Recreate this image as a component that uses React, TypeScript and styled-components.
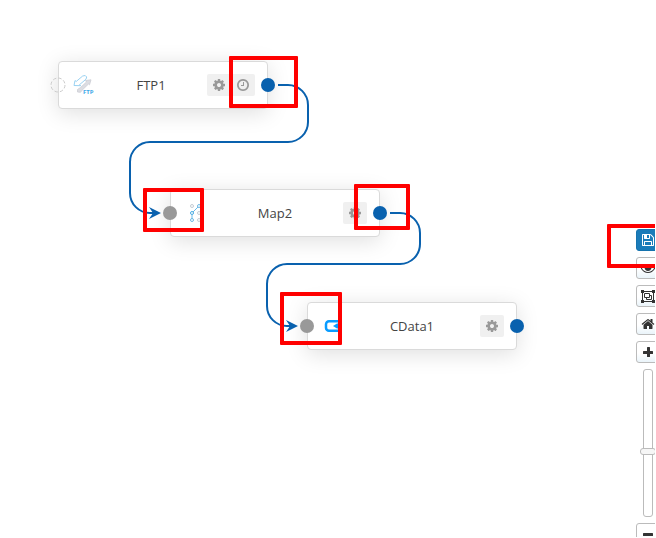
import React from "react";
import styled, { createGlobalStyle, css } from "styled-components";

const BLUE = "#0961ae";
const RED = "#ff0000";

const GlobalStyle = createGlobalStyle`
  * { box-sizing: border-box; }
  html, body, #root { height: 100%; margin: 0; }
  body { background: #fff; overflow: hidden; }
`;

const Screen = styled.main`
  position: relative;
  display: flex;
  justify-content: flex-end;
  height: calc(100% - 1px);
  margin-right: 1px;
  overflow: hidden;
  background: #fff;
  color: #444;
  font-family: "Open Sans", "Noto Sans", sans-serif;
  font-size: 13px;
`;

const Canvas = styled.section`
  flex: 1;
  min-width: 0;
`;

const Wires = styled.svg`
  position: absolute;
  inset: 0;
  width: 100%;
  height: 100%;
  overflow: visible;
  pointer-events: none;
`;

const Node = styled.article<{ $x: number; $y: number }>`
  position: absolute;
  left: ${(p) => p.$x}px;
  top: ${(p) => p.$y}px;
  display: flex;
  align-items: center;
  width: 210px;
  height: 48px;
  padding: 0 12px 0 14px;
  border: 1px solid #dadada;
  border-radius: 4px;
  background: #fff;
  box-shadow: 0 4px 22px rgba(0, 0, 0, 0.13);
`;

const NodeIcon = styled.svg`
  flex: none;
  width: 22px;
  height: 22px;
`;

const NodeName = styled.h2`
  flex: 1;
  margin: 0;
  font-size: 13px;
  font-weight: 400;
  line-height: 20px;
  text-align: center;
`;

const Actions = styled.div`
  display: flex;
  flex: none;
`;

const ActionButton = styled.button`
  display: grid;
  place-items: center;
  width: 24px;
  height: 22px;
  padding: 0;
  border: 0;
  border-radius: 2px;
  background: #f0f0f0;
  color: #999;
`;

const Port = styled.span<{ $side: "in" | "out"; $kind: "blue" | "gray" | "empty" }>`
  position: absolute;
  top: 16px;
  width: 14px;
  height: 14px;
  border-radius: 50%;
  ${(p) => (p.$side === "in" ? "left: -8px;" : "right: -8px;")}
  ${(p) =>
    p.$kind !== "empty" &&
    css`
      background: ${p.$kind === "blue" ? BLUE : "#999"};
    `}
`;

const EmptyRing = styled.svg`
  display: block;
  width: 14px;
  height: 14px;
  overflow: visible;
`;

const Highlight = styled.div<{ $x: number; $y: number; $w: number; $h: number }>`
  position: absolute;
  left: ${(p) => p.$x}px;
  top: ${(p) => p.$y}px;
  width: ${(p) => p.$w}px;
  height: ${(p) => p.$h}px;
  border: 4px solid ${RED};
  border-radius: 1px;
  pointer-events: none;
`;

const Toolbar = styled.aside`
  display: flex;
  flex: none;
  flex-direction: column;
  align-items: center;
  gap: 6px;
  width: 24px;
  margin-right: -5px;
  padding-top: 229px;
`;

const ToolButton = styled.button<{ $primary?: boolean }>`
  display: grid;
  flex: none;
  place-items: center;
  width: 24px;
  height: 22px;
  padding: 0;
  border: 1px solid ${(p) => (p.$primary ? "#1573ae" : "#bbb")};
  border-radius: 3px;
  background: ${(p) => (p.$primary ? "#1a7bb9" : "linear-gradient(#fff 55%, #eaf4fa)")};
  color: ${(p) => (p.$primary ? "#fff" : "#333")};
`;

const Slider = styled.input`
  flex: none;
  width: 16px;
  height: 148px;
  margin: 0;
  appearance: none;
  writing-mode: vertical-lr;
  direction: rtl;
  background: transparent;

  &::-webkit-slider-runnable-track {
    width: 10px;
    height: 148px;
    border: 1px solid #bbb;
    border-radius: 3px;
    background: #fff;
  }

  &::-webkit-slider-thumb {
    appearance: none;
    width: 16px;
    height: 7px;
    margin-left: -4px;
    border: 1px solid #bbb;
    border-radius: 3px;
    background: #f6f6f6;
  }
`;

const Glyph = styled.svg<{ $w?: number }>`
  display: block;
  width: ${(p) => p.$w ?? 14}px;
  height: 14px;
  fill: currentColor;
`;

const paths = {
  cog: "M1152 896q0-106-75-181t-181-75-181 75-75 181 75 181 181 75 181-75 75-181zm512-109v222q0 12-8 23t-20 13l-185 28q-19 54-39 91 35 50 107 138 10 12 10 25t-9 23q-27 37-99 108t-94 71q-12 0-26-9l-138-108q-44 23-91 38-16 136-29 186-7 28-36 28h-222q-14 0-24.5-8.5t-11.5-21.5l-28-184q-49-16-90-37l-141 107q-10 9-25 9-14 0-25-11-126-114-165-168-7-10-7-23 0-12 8-23 15-21 51-66.5t54-70.5q-27-50-41-99l-183-27q-13-2-21-12.5t-8-23.5v-222q0-12 8-23t19-13l186-28q14-46 39-92-40-57-107-138-10-12-10-24 0-10 9-23 26-36 98.5-107.5t94.5-71.5q13 0 26 10l138 107q44-23 91-38 16-136 29-186 7-28 36-28h222q14 0 24.5 8.5t11.5 21.5l28 184q49 16 90 37l142-107q9-9 24-9 13 0 25 10 129 119 165 170 7 8 7 22 0 12-8 23-15 21-51 66.5t-54 70.5q26 50 41 98l183 28q13 2 21 12.5t8 23.5z",
  clock: "M1024 544v448q0 14-9 23t-23 9h-320q-14 0-23-9t-9-23v-64q0-14 9-23t23-9h224v-352q0-14 9-23t23-9h64q14 0 23 9t9 23zm416 352q0-148-73-273t-198-198-273-73-273 73-198 198-73 273 73 273 198 198 273 73 273-73 198-198 73-273zm224 0q0 209-103 385.5t-279.5 279.5-385.5 103-385.5-103-279.5-279.5-103-385.5 103-385.5 279.5-279.5 385.5-103 385.5 103 279.5 279.5 103 385.5z",
  save: "M512 1536h768v-384h-768v384zm896 0h128v-896q0-14-10-38.5t-20-34.5l-281-281q-10-10-34-20t-39-10v416q0 40-28 68t-68 28h-576q-40 0-68-28t-28-68v-416h-128v1280h128v-416q0-40 28-68t68-28h832q40 0 68 28t28 68v416zm-384-928v-320q0-13-9.5-22.5t-22.5-9.5h-192q-13 0-22.5 9.5t-9.5 22.5v320q0 13 9.5 22.5t22.5 9.5h192q13 0 22.5-9.5t9.5-22.5zm640 32v928q0 40-28 68t-68 28h-1344q-40 0-68-28t-28-68v-1344q0-40 28-68t68-28h928q40 0 88 20t76 48l280 280q28 28 48 76t20 88z",
  eye: "M1664 960q-152-236-381-353 61 104 61 225 0 185-131.5 316.5t-316.5 131.5-316.5-131.5-131.5-316.5q0-121 61-225-229 117-381 353 133 205 333.5 326.5t434.5 121.5 434.5-121.5 333.5-326.5zm-720-384q0-20-14-34t-34-14q-125 0-214.5 89.5t-89.5 214.5q0 20 14 34t34 14 34-14 14-34q0-86 61-147t147-61q20 0 34-14t14-34zm848 384q0 34-20 69-140 230-376.5 368.5t-499.5 138.5-499.5-139-376.5-368q-20-35-20-69t20-69q140-229 376.5-368t499.5-139 499.5 139 376.5 368q20 35 20 69z",
  home: "M1472 992v480q0 26-19 45t-45 19h-384v-384h-256v384h-384q-26 0-45-19t-19-45v-480q0-1 .5-3t.5-3l575-474 575 474q1 2 1 6zm223-69l-62 74q-8 9-21 11h-3q-13 0-21-7l-692-577-692 577q-12 8-24 7-13-2-21-11l-62-74q-8-10-7-23.5t11-21.5l719-599q32-26 76-26t76 26l244 204v-195q0-14 9-23t23-9h192q14 0 23 9t9 23v408l219 182q10 8 11 21.5t-7 23.5z",
};

const Icon = ({ name }: { name: keyof typeof paths }) => (
  <Glyph viewBox="0 0 1792 1792" aria-hidden="true">
    <path d={paths[name]} />
  </Glyph>
);

const GroupIcon = () => (
  <Glyph $w={16} viewBox="0 0 16 14" aria-hidden="true">
    <path
      d="M3 2.500h10M3 12.500h10M2.500 4v7M13.500 4v7M4.500 4.500h5v4h-5zM10 6.500h1.500v4h-5V9"
      fill="none"
      stroke="currentColor"
    />
    <path d="M1 1h3v3H1zM12 1h3v3h-3zM1 11h3v3H1zM12 11h3v3h-3z" />
  </Glyph>
);

const PlusIcon = () => (
  <Glyph viewBox="0 0 14 14" aria-hidden="true">
    <rect x="2" y="6" width="10" height="3" rx=".5" />
    <rect x="6" y="2" width="3" height="10" rx=".5" />
  </Glyph>
);

const MinusIcon = () => (
  <Glyph viewBox="0 0 14 14" aria-hidden="true">
    <rect x="2" y="6" width="10" height="3" rx=".5" />
  </Glyph>
);

const FtpText = styled.text`
  font: 700 6px "Open Sans", sans-serif;
  fill: #3fa9e8;
`;

const FtpIcon = () => (
  <NodeIcon viewBox="0 0 22 22" aria-hidden="true">
    <path
      d="M4.500 15.500v2.500l3 .3 1.500-2 6.500-6.300 1 .8 1.500-5-5.500.7 1 1.500-6 5.500z"
      fill="#dcdde2"
      stroke="#cccdd4"
      strokeWidth=".8"
      strokeLinejoin="round"
    />
    <path
      d="M1 11.500l1-5 1.200 1 6.500-5.500 2.500-.5 1.500 1.500-.7 2.200-6.500 5.500 1.200 1z"
      fill="#fff"
      stroke="#9ad2f2"
      strokeLinejoin="round"
    />
    <FtpText x="10" y="20">FTP</FtpText>
  </NodeIcon>
);

const MapIcon = () => (
  <NodeIcon viewBox="0 0 22 22" aria-hidden="true" fill="none">
    <path d="M8 10l5-5M7 13v4" stroke="#6db9e6" />
    <circle cx="7" cy="4" r="1.500" stroke="#c4ccd4" />
    <circle cx="7" cy="11" r="1.500" stroke="#4aace3" />
    <circle cx="7" cy="18" r="1.500" stroke="#6db9e6" />
    <circle cx="14" cy="4" r="1.500" stroke="#6db9e6" />
    <circle cx="14" cy="11" r="1.500" stroke="#c4ccd4" />
    <circle cx="14" cy="18" r="1.500" stroke="#c4ccd4" />
  </NodeIcon>
);

const CDataIcon = () => (
  <NodeIcon viewBox="0 0 22 22" aria-hidden="true">
    <path
      d="M17 6.200H7a3 3 0 0 0-3 3v3.600a3 3 0 0 0 3 3h10"
      fill="none"
      stroke="#0a9cff"
      strokeWidth="2.500"
    />
    <path d="M15 8.500L11 11l4 2.500h3v-5z" fill="#0a9cff" />
  </NodeIcon>
);

const nodes = [
  { name: "FTP1", x: 58, y: 61, icon: <FtpIcon />, input: "empty", scheduled: true },
  { name: "Map2", x: 170, y: 189, icon: <MapIcon />, input: "gray", scheduled: false },
  { name: "CData1", x: 307, y: 302, icon: <CDataIcon />, input: "gray", scheduled: false },
] as const;

const highlights = [
  [229, 56, 69, 52],
  [143, 188, 61, 44],
  [354, 184, 56, 46],
  [280, 292, 62, 53],
  [607, 224, 64, 44],
];

export default function App() {
  return (
    <Screen>
      <GlobalStyle />
      <Canvas aria-label="Flow">
        {nodes.map((n) => (
          <Node key={n.name} $x={n.x} $y={n.y}>
            {n.icon}
            <NodeName>{n.name}</NodeName>
            <Actions>
              <ActionButton aria-label="Settings"><Icon name="cog" /></ActionButton>
              {n.scheduled && <ActionButton aria-label="Schedule"><Icon name="clock" /></ActionButton>}
            </Actions>
            <Port $side="in" $kind={n.input}>
              {n.input === "empty" && (
                <EmptyRing viewBox="0 0 14 14" aria-hidden="true">
                  <circle cx="7" cy="7" r="7" fill="none" stroke="#ccc" strokeDasharray="3.500 2" />
                </EmptyRing>
              )}
            </Port>
            <Port $side="out" $kind="blue" />
          </Node>
        ))}
        <Wires aria-hidden="true">
          <g fill="none" stroke={BLUE} strokeWidth="2">
            <path d="M278 85h10a20 20 0 0 1 20 20v17a20 20 0 0 1-20 20H150a20 20 0 0 0-20 20v31a20 20 0 0 0 20 20h6" />
            <path d="M390 213h10a20 20 0 0 1 20 20v11a20 20 0 0 1-20 20H287a20 20 0 0 0-20 20v22a20 20 0 0 0 20 20h6" />
          </g>
          <g fill={BLUE}>
            <path d="M161 213l-12-6 4 6-4 6z" />
            <path d="M298 326l-12-6 4 6-4 6z" />
          </g>
        </Wires>
      </Canvas>
      <Toolbar aria-label="Canvas tools">
        <ToolButton $primary aria-label="Save"><Icon name="save" /></ToolButton>
        <ToolButton aria-label="Preview"><Icon name="eye" /></ToolButton>
        <ToolButton aria-label="Select group"><GroupIcon /></ToolButton>
        <ToolButton aria-label="Home"><Icon name="home" /></ToolButton>
        <ToolButton aria-label="Zoom in"><PlusIcon /></ToolButton>
        <Slider type="range" aria-label="Zoom" min={0} max={100} defaultValue={44} />
        <ToolButton aria-label="Zoom out"><MinusIcon /></ToolButton>
      </Toolbar>
      {highlights.map(([x, y, w, h]) => (
        <Highlight key={`${x}-${y}`} $x={x} $y={y} $w={w} $h={h} />
      ))}
    </Screen>
  );
}
